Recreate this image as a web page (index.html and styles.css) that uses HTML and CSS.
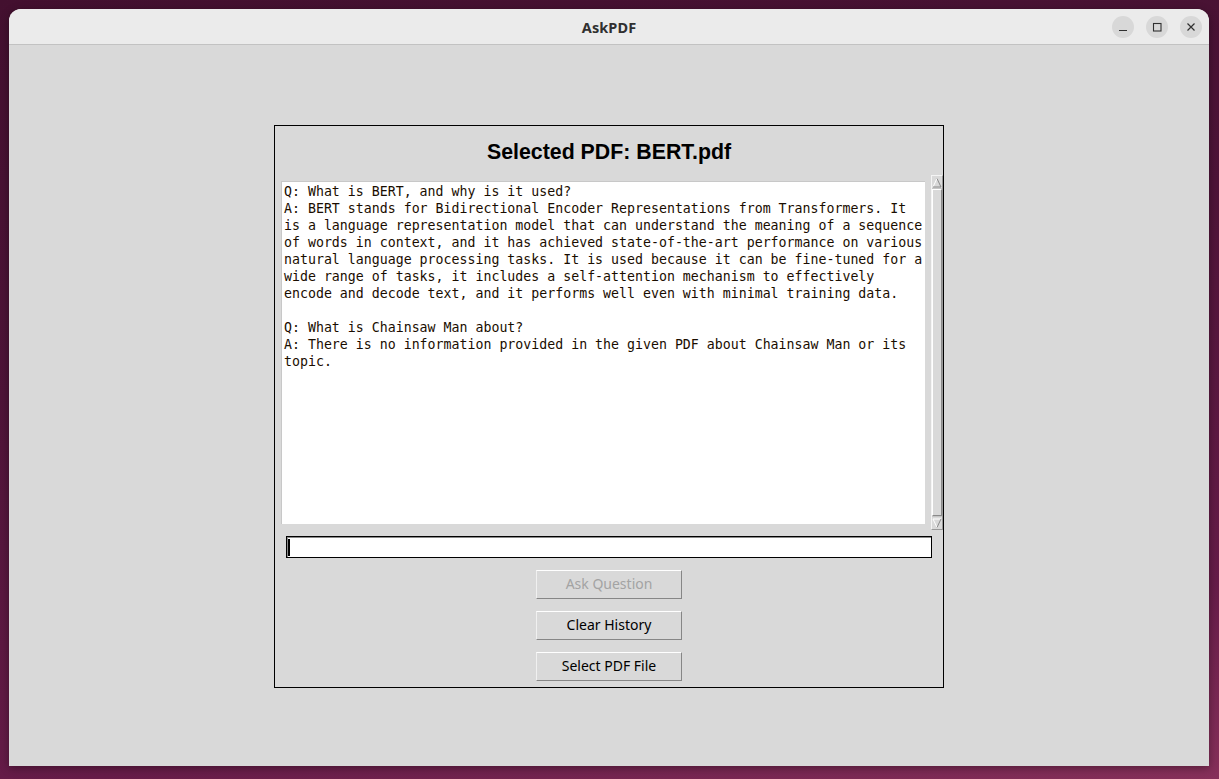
FILE: index.html
```html
<!DOCTYPE html>
<html>
<head>
<meta charset="utf-8">
<link rel="stylesheet" href="styles.css">
<title>AskPDF</title>
</head>
<body>
<div class="window">
  <div class="titlebar">
    <div class="title">AskPDF</div>
    <div class="controls">
      <div class="ctl"><svg width="12" height="12" viewBox="0 0 12 12"><path d="M2 9.5h8" stroke="#303030" stroke-width="1.2" fill="none"/></svg></div>
      <div class="ctl"><svg width="12" height="12" viewBox="0 0 12 12"><rect x="2.5" y="2.5" width="7.5" height="7.5" stroke="#303030" stroke-width="1.1" fill="none"/></svg></div>
      <div class="ctl"><svg width="12" height="12" viewBox="0 0 12 12"><path d="M2.5 2.5l7 7M9.5 2.5l-7 7" stroke="#303030" stroke-width="1.2" fill="none"/></svg></div>
    </div>
  </div>
  <div class="content">
    <div class="frame">
      <div class="heading">Selected PDF: BERT.pdf</div>
      <div class="textrow">
        <pre class="textbox">Q: What is BERT, and why is it used?
A: BERT stands for Bidirectional Encoder Representations from Transformers. It
is a language representation model that can understand the meaning of a sequence
of words in context, and it has achieved state-of-the-art performance on various
natural language processing tasks. It is used because it can be fine-tuned for a
wide range of tasks, it includes a self-attention mechanism to effectively
encode and decode text, and it performs well even with minimal training data.

Q: What is Chainsaw Man about?
A: There is no information provided in the given PDF about Chainsaw Man or its
topic.</pre>
        <div class="scrollbar">
          <div class="arrow"><svg width="10" height="11" viewBox="0 0 10 11"><path d="M1 10L5 1.5" stroke="#fff" stroke-width="1" fill="none"/><path d="M5 1.5L9 10H1" stroke="#8a8a8a" stroke-width="1" fill="none"/></svg></div>
          <div class="thumb"></div>
          <div class="arrow"><svg width="10" height="11" viewBox="0 0 10 11"><path d="M9 1H1L5 9.5" stroke="#fff" stroke-width="1" fill="none"/><path d="M5 9.5L9 1" stroke="#8a8a8a" stroke-width="1" fill="none"/></svg></div>
        </div>
      </div>
      <div class="entry"><span class="cursor"></span></div>
      <div class="buttons">
        <div class="btn disabled">Ask Question</div>
        <div class="btn">Clear History</div>
        <div class="btn">Select PDF File</div>
      </div>
    </div>
  </div>
</div>
</body>
</html>
```
FILE: styles.css
```css
html, body {
  margin: 0;
  padding: 0;
}
body {
  width: 1219px;
  height: 779px;
  overflow: hidden;
  background: linear-gradient(170deg, #43102f 0%, #4e1438 40%, #661c48 80%, #86305a 100%);
  padding: 9px 10px 13px 9px;
  box-sizing: border-box;
}
.window {
  width: 1200px;
  height: 757px;
  border-radius: 12px 12px 0 0;
  overflow: hidden;
  background: #d9d9d9;
  box-shadow: 0 2px 8px rgba(0,0,0,0.35);
  display: flex;
  flex-direction: column;
}
.titlebar {
  height: 35px;
  flex: none;
  background: #ebebeb;
  border-bottom: 1px solid #c2c2c2;
  position: relative;
  display: flex;
  align-items: center;
  justify-content: center;
}
.title {
  font-family: "Noto Sans", "DejaVu Sans", sans-serif;
  font-weight: bold;
  font-size: 14.5px;
  color: #303030;
  letter-spacing: 0.1px;
}
.controls {
  position: absolute;
  right: 7px;
  top: 7px;
  display: flex;
  gap: 12px;
}
.ctl {
  width: 22px;
  height: 22px;
  border-radius: 50%;
  background: #d8d8d8;
  display: flex;
  align-items: center;
  justify-content: center;
}
.content {
  flex: 1;
  display: flex;
  flex-direction: column;
  align-items: center;
  padding-top: 80px;
}
.frame {
  width: 670px;
  height: 563px;
  box-sizing: border-box;
  border: 1px solid #000;
  display: flex;
  flex-direction: column;
}
.heading {
  height: 49px;
  box-sizing: border-box;
  padding-top: 14px;
  line-height: 25px;
  text-align: center;
  font-family: "Liberation Sans", Arial, sans-serif;
  font-weight: bold;
  font-size: 21.33px;
  color: #000;
}
.textrow {
  height: 355px;
  display: flex;
  align-items: flex-start;
}
.textbox {
  margin: 6px 6px 0 6px;
  width: 644px;
  height: 343px;
  box-sizing: border-box;
  background: #fff;
  border-top: 1px solid #c8c8c8;
  border-left: 1px solid #c8c8c8;
  padding: 1px 0 0 2px;
  font-family: "DejaVu Sans Mono", monospace;
  font-size: 13.25px;
  line-height: 17px;
  color: #1a0d00;
  white-space: pre;
  overflow: hidden;
}
.scrollbar {
  width: 12px;
  height: 355px;
  box-sizing: border-box;
  background: #c6c6c6;
  border-left: 1px solid #f4f4f4;
  border-top: 1px solid #f4f4f4;
  border-right: 1px solid #9a9a9a;
  border-bottom: 1px solid #9a9a9a;
  display: flex;
  flex-direction: column;
}
.arrow {
  height: 12px;
  flex: none;
  display: flex;
  align-items: center;
  justify-content: center;
  background: #d9d9d9;
}
.thumb {
  flex: 1;
  margin: 1px 0;
  background: #d9d9d9;
  border-top: 1px solid #fff;
  border-left: 1px solid #fff;
  border-bottom: 1px solid #8a8a8a;
  border-right: 1px solid #8a8a8a;
}
.entry {
  margin: 6px 0 0 11px;
  width: 646px;
  height: 22px;
  box-sizing: border-box;
  background: #fff;
  border: 1px solid #000;
  box-shadow: inset 1px 1px 0 #8a8a8a;
  position: relative;
}
.cursor {
  position: absolute;
  left: 1px;
  top: 2px;
  width: 2px;
  height: 17px;
  background: #000;
}
.buttons {
  margin-top: 12px;
  display: flex;
  flex-direction: column;
  align-items: center;
  gap: 12px;
}
.btn {
  width: 146px;
  height: 29px;
  box-sizing: border-box;
  padding-bottom: 2px;
  border-top: 1px solid #ffffff;
  border-left: 1px solid #f0f0f0;
  border-bottom: 1px solid #868686;
  border-right: 1px solid #868686;
  background: #d9d9d9;
  font-family: "Noto Sans", "DejaVu Sans", sans-serif;
  font-size: 14px;
  color: #000;
  display: flex;
  align-items: center;
  justify-content: center;
}
.btn.disabled {
  color: #a3a3a3;
}
```
